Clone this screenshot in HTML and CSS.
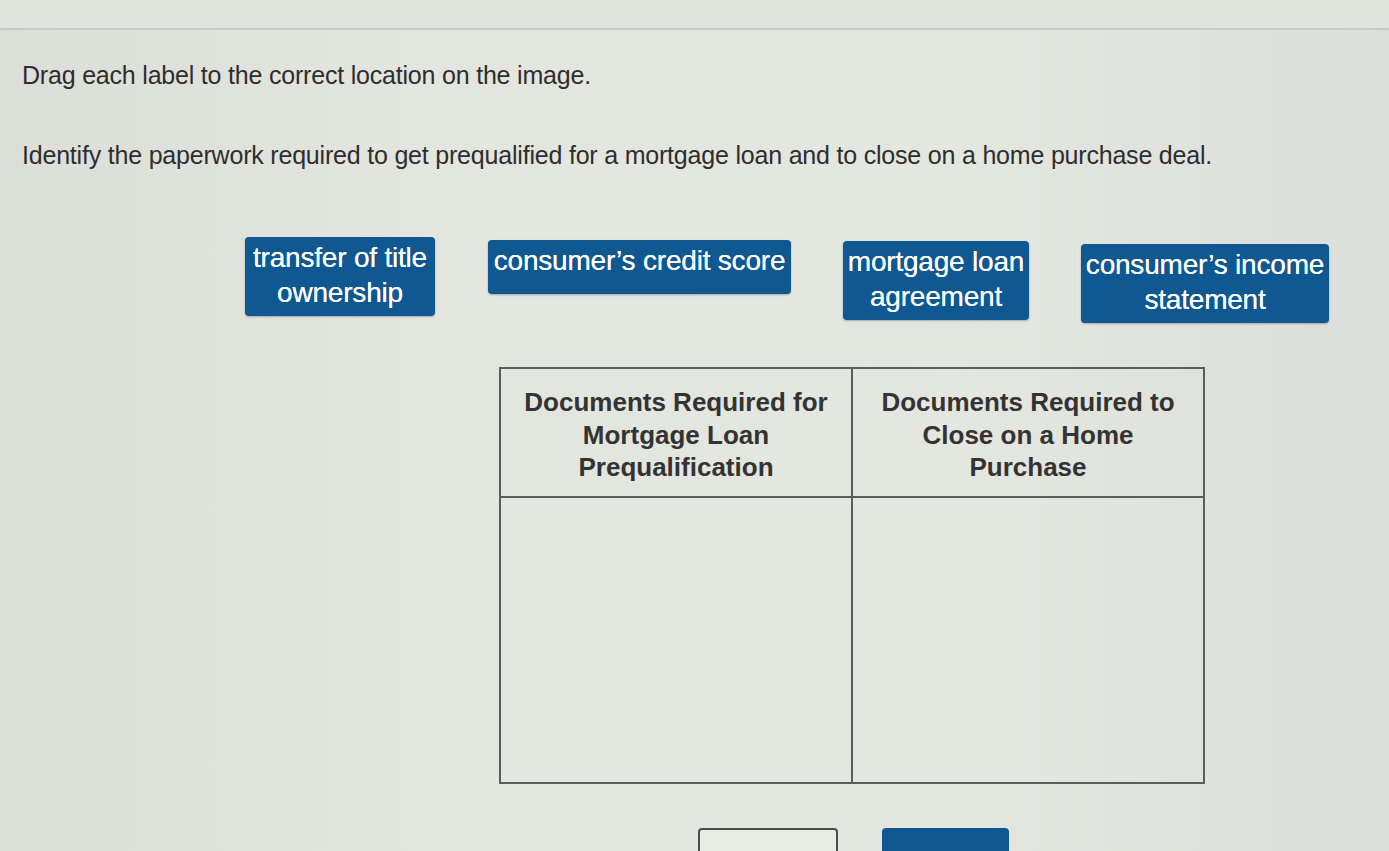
FILE: index.html
```html
<!DOCTYPE html>
<html lang="en">
<head>
<meta charset="utf-8">
<title>Mortgage paperwork</title>
<link rel="stylesheet" href="styles.css">
</head>
<body>
<div class="topbar"></div>
<main class="question">
  <p class="prompt">Drag each label to the correct location on the image.</p>
  <p class="prompt second">Identify the paperwork required to get prequalified for a mortgage loan and to close on a home purchase deal.</p>

  <div class="labels">
    <div class="label l1">transfer of title<br>ownership</div>
    <div class="label l2">consumer’s credit score</div>
    <div class="label l3">mortgage loan<br>agreement</div>
    <div class="label l4">consumer’s income<br>statement</div>
  </div>

  <table class="sort-table">
    <thead>
      <tr>
        <th>Documents Required for<br>Mortgage Loan<br>Prequalification</th>
        <th>Documents Required to<br>Close on a Home<br>Purchase</th>
      </tr>
    </thead>
    <tbody>
      <tr><td></td><td></td></tr>
    </tbody>
  </table>

  <div class="actions">
    <button class="btn outline" type="button"></button>
    <button class="btn solid" type="button"></button>
  </div>
</main>
</body>
</html>
```
FILE: styles.css
```css
html, body {
  margin: 0;
  padding: 0;
}

body {
  width: 1389px;
  height: 851px;
  overflow: hidden;
  background: linear-gradient(90deg, #dcded8 0%, #e3e5df 30%, #e4e6e0 70%, #dcdfd9 100%);
  font-family: "Liberation Sans", Arial, sans-serif;
  color: #2e2e2e;
}

.topbar {
  height: 28px;
  border-bottom: 2px solid #c9cbc6;
  background: #e0e2dc;
}

.question {
  padding: 0 0 0 22px;
}

.prompt {
  margin: 0;
  font-size: 25px;
  line-height: 30px;
  color: #2e2e2e;
  letter-spacing: -0.2px;
}

.prompt:first-child {
  padding-top: 30px;
}

.prompt.second {
  margin-top: 50px;
}

.labels {
  display: flex;
  align-items: flex-start;
  margin: 67px 0 0 223px;
}

.label {
  background: #0f5892;
  color: #fff;
  border-radius: 4px;
  font-size: 28px;
  line-height: 35px;
  text-align: center;
  letter-spacing: -0.2px;
  padding: 3px 0 6px;
  white-space: nowrap;
  text-shadow: 0 0 0.6px #fff;
  box-shadow: 0 1px 2px rgba(0,0,0,0.25);
}

.l1 { width: 190px; }
.l2 { width: 303px; margin-left: 53px; margin-top: 3px; padding-bottom: 16px; }
.l3 { width: 186px; margin-left: 52px; margin-top: 4px; }
.l4 { width: 248px; margin-left: 52px; margin-top: 7px; }

.sort-table {
  border-collapse: collapse;
  margin: 44px 0 0 477px;
  width: 706px;
}

.sort-table th,
.sort-table td {
  border: 2px solid #5b5d5b;
  width: 50%;
}

.sort-table th {
  height: 110px;
  font-size: 26px;
  line-height: 32.5px;
  font-weight: bold;
  color: #333;
  padding: 17px 0 0;
  vertical-align: top;
  text-align: center;
}

.sort-table td {
  height: 282px;
}

.actions {
  display: flex;
  gap: 44px;
  margin: 44px 0 0 676px;
}

.btn {
  height: 40px;
  border-radius: 4px;
  padding: 0;
}

.btn.outline {
  width: 140px;
  background: #e8eae4;
  border: 2px solid #4a4c4c;
}

.btn.solid {
  width: 127px;
  background: #0f5892;
  border: none;
}
```
